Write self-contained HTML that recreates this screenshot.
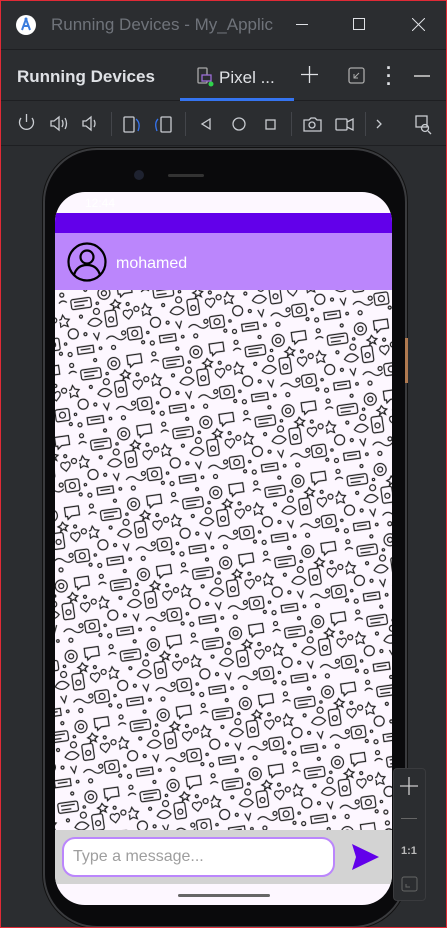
<!DOCTYPE html>
<html><head><meta charset="utf-8"><style>
*{margin:0;padding:0;box-sizing:border-box}
body{width:447px;height:928px;background:#2b2d30;font-family:"Liberation Sans",sans-serif;position:relative;overflow:hidden}
.frame{position:absolute;inset:0;border:1px solid #e02a36;pointer-events:none;z-index:50}
.title{position:absolute;top:0;left:0;width:447px;height:50px;border-bottom:1px solid #1e1f22}
.t{position:absolute;color:#dfe1e5}
.tabs{position:absolute;top:50px;left:0;width:447px;height:51px;border-bottom:1px solid #1e1f22}
.sep{position:absolute;top:112px;width:1px;height:24px;background:#43454a}
.phone{position:absolute;left:43px;top:148px;width:364px;height:780px;background:#0a0a0c;border-radius:54px;border:2px solid #3a3b3e;box-shadow:0 0 0 1px #111}
.screen{position:absolute;left:55px;top:192px;width:337px;height:713px;background:#fdf7ff;border-radius:30px;overflow:hidden}
</style></head><body>
<div class="frame"></div>
<div class="title">
<svg style="position:absolute;left:16px;top:15px" width="20" height="20" viewBox="0 0 20 20"><circle cx="10" cy="10" r="10" fill="#fff"/><path d="M10 4 L6 15 M10 4 L14 15 M7 11 H13" stroke="#3b7ddd" stroke-width="2" fill="none"/><circle cx="10" cy="4" r="1.5" fill="#3b7ddd"/></svg>
<div class="t" style="left:51px;top:15px;font-size:17px;color:#6f737a;white-space:nowrap;width:222px;overflow:hidden">Running Devices - My_Applic</div>
<div style="position:absolute;left:296px;top:24px;width:12px;height:1px;background:#dfe1e5"></div>
<div style="position:absolute;left:353px;top:18px;width:12px;height:12px;border:1px solid #dfe1e5"></div>
<svg style="position:absolute;left:412px;top:18px" width="13" height="13"><path d="M0 0L13 13M13 0L0 13" stroke="#dfe1e5"/></svg>
</div>
<div class="tabs">
<div class="t" style="left:17px;top:17px;font-size:17px;font-weight:bold">Running Devices</div>
<svg style="position:absolute;left:197px;top:17px" width="18" height="20"><rect x="1" y="1" width="9" height="15" rx="1" fill="none" stroke="#aaa" stroke-width="1.3"/><rect x="5" y="8" width="9" height="6" fill="#2b2d30" stroke="#9b6dd6" stroke-width="1.3"/><circle cx="14" cy="17" r="2.5" fill="#2fd34c"/></svg>
<div class="t" style="left:219px;top:18px;font-size:17px">Pixel ...</div>
<div style="position:absolute;left:180px;top:48px;width:114px;height:3px;background:#3574f0"></div>
<svg style="position:absolute;left:301px;top:16px" width="17" height="17"><path d="M8.5 0V17M0 8.5H17" stroke="#dfe1e5" stroke-width="1.3"/></svg>
<svg style="position:absolute;left:348px;top:17px" width="17" height="17"><rect x="1" y="1" width="15" height="15" rx="2" fill="none" stroke="#aaa" stroke-width="1.3"/><path d="M11 6L6 11M6 7V11H10" stroke="#aaa" fill="none"/></svg>
<div class="t" style="left:386px;top:14px;font-size:18px;font-weight:bold;line-height:8px;width:6px;text-align:center">·<br>·<br>·</div>
<div style="position:absolute;left:414px;top:25px;width:16px;height:1.5px;background:#aaa"></div>
</div>
<svg style="position:absolute;left:0;top:101px" width="447" height="45" viewBox="0 0 447 45" fill="none" stroke="#c9ccd1" stroke-width="1.3">
<path d="M21 17A7 7 0 1 0 32 17M26.5 13V21"/>
<path d="M51 20H54L59 16V29L54 25H51Z M62 19Q64 22.5 62 26 M65 17Q68 22.5 65 28"/>
<path d="M83 20H86L91 16V29L86 25H83Z M94 19Q96 22.5 94 26"/>
<rect x="124" y="16" width="10" height="15" rx="1"/><path d="M136 18Q141 22 138 30" stroke="#3574f0"/>
<rect x="161" y="16" width="10" height="15" rx="1"/><path d="M158 18Q154 22 157 30" stroke="#3574f0"/>
<path d="M210 18L202 23L210 28Z"/><circle cx="239" cy="23" r="6"/><rect x="266" y="19" width="9" height="9"/>
<path d="M304 19H309L311 17H315L317 19H321V30H304Z"/><circle cx="312" cy="24" r="3"/>
<rect x="336" y="18" width="11" height="11" rx="1"/><path d="M347 21L353 18V29L347 26"/>
<path d="M377 19L381 23L377 27"/>
<rect x="416" y="15" width="11" height="11"/><circle cx="425" cy="27" r="3.5"/><path d="M428 30L431 33"/>
</svg>
<div class="sep" style="left:111px"></div><div class="sep" style="left:185px"></div><div class="sep" style="left:291px"></div><div class="sep" style="left:365px"></div>
<div style="position:absolute;left:0;top:145px;width:447px;height:1px;background:#1e1f22"></div>
<div class="phone"></div>
<div style="position:absolute;left:168px;top:174px;width:36px;height:3px;background:#333;border-radius:2px"></div>
<div style="position:absolute;left:134px;top:170px;width:10px;height:10px;border-radius:50%;background:#1e2230"></div>
<div style="position:absolute;left:405px;top:338px;width:3px;height:45px;background:#b07a50"></div>
<div class="screen">
<div style="height:21px;color:#fff;font-size:12px;padding:4px 0 0 30px">12:44</div>
<div style="height:20px;background:#6200ea"></div>
<div style="height:57px;background:#bb86fc;position:relative">
<svg style="position:absolute;left:12px;top:9px" width="40" height="40" viewBox="0 0 40 40" fill="none" stroke="#000" stroke-width="2.2"><circle cx="20" cy="20" r="18.5"/><circle cx="20" cy="15" r="6.5"/><path d="M7 33Q10 23 20 23Q30 23 33 33"/></svg>
<div style="position:absolute;left:61px;top:22px;color:#fff;font-size:16px">mohamed</div>
</div>
<svg width="337" height="540" style="display:block">
<defs><pattern id="p" width="83" height="71" patternUnits="userSpaceOnUse" patternTransform="rotate(-8)">
<rect width="83" height="71" fill="#fdf7ff"/>
<g fill="none" stroke="#1e1e1e" stroke-width="1.2">
<circle cx="6" cy="6" r="2"/><circle cx="30" cy="4" r="1.5"/><circle cx="48" cy="10" r="6"/><circle cx="48" cy="10" r="2.5"/>
<rect x="14" y="12" width="20" height="10" rx="2"/><path d="M17 15H31M17 19H27"/>
<path d="M4 26l2 4 4 1-3 3 1 4-4-2-4 2 1-4-3-3 4-1z"/>
<circle cx="22" cy="30" r="1.5"/><circle cx="38" cy="27" r="3"/><path d="M28 38q7-9 14 0q-7 7-14 0z"/>
<rect x="46" y="28" width="11" height="16" rx="2"/><circle cx="51.5" cy="37" r="2.5"/><circle cx="12" cy="46" r="5"/><circle cx="24" cy="48" r="1.5"/>
<path d="M32 48l3 7 3-7"/><circle cx="3" cy="55" r="1.2"/><circle cx="40" cy="19" r="1.2"/><path d="M2 14q4-4 8 0"/>
<path d="M62 4h14v9h-8l-4 3v-3h-2z"/><circle cx="70" cy="24" r="1.5"/><circle cx="78" cy="30" r="2.5"/>
<path d="M66 36c-4-4 0-8 3-5c3-3 7 1 3 5l-3 3z"/><circle cx="62" cy="52" r="2"/><rect x="66" y="48" width="14" height="12" rx="2"/><circle cx="73" cy="54" r="3"/>
<path d="M44 56q5-5 10 0t10 0"/><circle cx="50" cy="65" r="2"/><path d="M14 60h16v7h-16z M17 63h10"/><circle cx="6" cy="66" r="2"/>
<path d="M58 18l2 3 3 1-3 2 1 3-3-2-3 2 1-3-3-2 3-1z"/><circle cx="80" cy="64" r="1.5"/><circle cx="37" cy="64" r="1.3"/>
</g></pattern></defs>
<rect width="337" height="540" fill="url(#p)"/></svg>
<div style="height:54px;background:#d3d3d3;position:relative">
<div style="position:absolute;left:7px;top:7px;width:273px;height:40px;border:2px solid #bb86fc;border-radius:13px;background:#fff;color:#9e9e9e;font-size:16px;padding:9px 0 0 9px">Type a message...</div>
<svg style="position:absolute;left:297px;top:14px" width="27" height="26" viewBox="0 0 27 26"><path d="M0 0L27 13L0 26L4 13Z" fill="#6200ea"/></svg>
</div>
<div style="position:absolute;left:123px;top:702px;width:92px;height:3px;background:#666;border-radius:2px"></div>
</div>
<div style="position:absolute;left:393px;top:768px;width:33px;height:133px;background:#2b2d30;border:1px solid #3a3b3e;border-radius:4px"></div>
<svg style="position:absolute;left:400px;top:777px" width="18" height="18"><path d="M9 0V18M0 9H18" stroke="#ccc" stroke-width="1.3"/></svg>
<div style="position:absolute;left:401px;top:818px;width:16px;height:1px;background:#666"></div>
<div class="t" style="left:401px;top:845px;font-size:11px;font-weight:bold;color:#bbb">1:1</div>
<svg style="position:absolute;left:401px;top:876px" width="17" height="16"><rect x="1" y="1" width="15" height="14" rx="2" fill="none" stroke="#666"/><path d="M5 8V11H9" stroke="#666" fill="none"/></svg>
</body></html>
